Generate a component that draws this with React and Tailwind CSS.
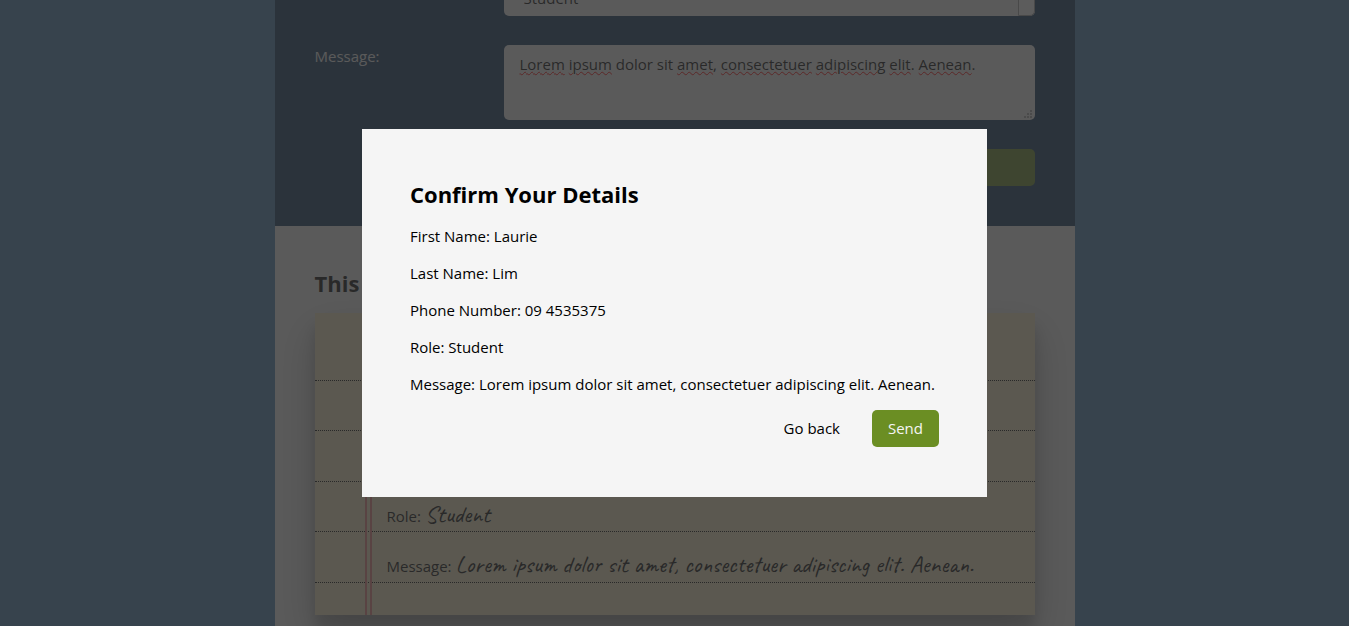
import React from "react";

const message = "Lorem ipsum dolor sit amet, consectetuer adipiscing elit. Aenean.";

const details = [
  ["First Name:", "Laurie"],
  ["Last Name:", "Lim"],
  ["Phone Number:", "09 4535375"],
  ["Role:", "Student"],
  ["Message:", message],
];

const misspelled = ["Lorem", "ipsum", "amet", "consectetuer", "adipiscing", "elit", "Aenean"];

function SpellingMarks({ text }) {
  return text.split(/(\w+)/).map((part, i) =>
    misspelled.includes(part) ? (
      <span
        key={i}
        className="underline decoration-[#ff0000] decoration-wavy decoration-1 underline-offset-1"
      >
        {part}
      </span>
    ) : (
      <span key={i}>{part}</span>
    )
  );
}

function ContactForm() {
  return (
    <form className="bg-[#0b335b] px-10 pb-10">
      <div className="grid grid-cols-[189px_1fr] gap-y-[29px]">
        <label htmlFor="role" className="-mt-[21px] text-[whitesmoke]">
          Role:
        </label>
        <div className="relative -mt-[21px] h-[37px]">
          <select
            id="role"
            defaultValue="Student"
            className="h-[37px] w-full appearance-none rounded-[5px] bg-[whitesmoke] px-5 leading-6 text-black"
          >
            <option>Student</option>
            <option>Teacher</option>
            <option>Other</option>
          </select>
          <span className="pointer-events-none absolute inset-y-0 right-0 w-[17px] rounded-r-[5px] border border-[#a0a0a0] bg-white" />
        </div>

        <label htmlFor="message" className="leading-[22px] text-[whitesmoke]">
          Message:
        </label>
        <div className="relative h-[75px]">
          <textarea
            id="message"
            defaultValue={message}
            spellCheck={false}
            className="block h-full w-full resize-none rounded-[5px] bg-[whitesmoke] px-4 py-2 leading-[22px] text-black"
          />
          <div
            aria-hidden="true"
            className="pointer-events-none absolute inset-0 px-4 py-2 leading-[22px] text-transparent"
          >
            <SpellingMarks text={message} />
          </div>
          <svg
            aria-hidden="true"
            viewBox="0 0 8 8"
            className="pointer-events-none absolute right-[3px] bottom-[2px] size-2 fill-[#a8a8a8]"
          >
            <path d="M6 0h2v2H6zM3 3h2v2H3zM6 3h2v2H6zM0 6h2v2H0zM3 6h2v2H3zM6 6h2v2H6z" />
          </svg>
        </div>

        <button
          type="button"
          className="col-start-2 h-[37px] rounded-[5px] bg-[#6b8e23] text-[whitesmoke]"
        >
          Submit
        </button>
      </div>
    </form>
  );
}

function Note() {
  return (
    <section className="px-10 pt-10 pb-16 text-black">
      <h2 className="text-[22px] leading-[34px] font-bold">This is what you wrote:</h2>
      <div className="relative mt-[13px] bg-[#f7eac4] pt-[17px] pb-8 shadow-[0_19px_38px_rgba(0,0,0,0.3),0_15px_12px_rgba(0,0,0,0.22)]">
        <ul>
          {details.map(([label, value]) => (
            <li
              key={label}
              className="flex items-baseline border-b border-dotted border-black pt-[18px] pl-[72px] whitespace-nowrap odd:h-[51px] even:h-[50px]"
            >
              <span className="leading-6">{label}</span>
              <span className="ml-1 font-[Caveat,'Liberation_Serif',serif] text-2xl leading-7">
                {value}
              </span>
            </li>
          ))}
        </ul>
        <span className="absolute inset-y-0 left-[50px] w-[7px] border-x-2 border-[#f08080]" />
      </div>
    </section>
  );
}

function ConfirmDialog() {
  return (
    <div className="fixed inset-0 flex items-center justify-center bg-[#333333]/80">
      <div
        role="dialog"
        aria-modal="true"
        aria-labelledby="confirm-title"
        className="w-[625px] max-w-full bg-[whitesmoke] px-12 pt-12 pb-[50px] text-black"
      >
        <h2 id="confirm-title" className="text-[22px] leading-[34px] font-bold">
          Confirm Your Details
        </h2>
        <div className="mt-[7px]">
          {details.map(([label, value]) => (
            <p key={label} className="leading-[37px] whitespace-nowrap">
              {label} {value}
            </p>
          ))}
        </div>
        <div className="mt-[7px] flex items-center justify-end gap-4">
          <button type="button" className="h-[37px] px-4">
            Go back
          </button>
          <button type="button" className="h-[37px] rounded-[5px] bg-[#6b8e23] px-4 text-[whitesmoke]">
            Send
          </button>
        </div>
      </div>
    </div>
  );
}

export default function App() {
  return (
    <div className="h-screen overflow-hidden bg-[#4682b4] font-['Segoe_UI','Open_Sans',sans-serif] text-[15px]">
      <main className="mx-auto min-h-full w-full max-w-[800px] bg-[whitesmoke]">
        <ContactForm />
        <Note />
      </main>
      <ConfirmDialog />
    </div>
  );
}
